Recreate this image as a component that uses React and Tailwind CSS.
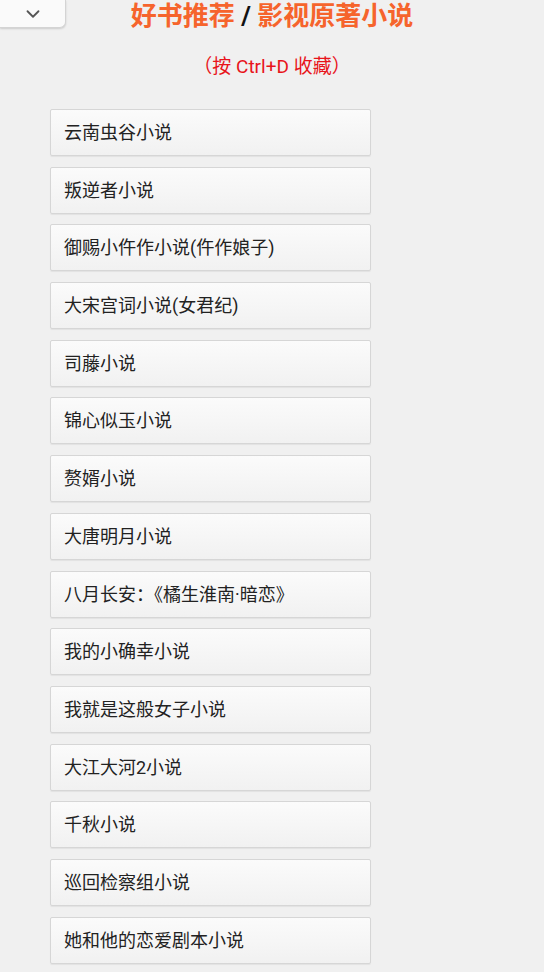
import { ChevronDown } from 'lucide-react';

const books = [
	'云南虫谷小说',
	'叛逆者小说',
	'御赐小仵作小说(仵作娘子)',
	'大宋宫词小说(女君纪)',
	'司藤小说',
	'锦心似玉小说',
	'赘婿小说',
	'大唐明月小说',
	'八月长安：《橘生淮南·暗恋》',
	'我的小确幸小说',
	'我就是这般女子小说',
	'大江大河2小说',
	'千秋小说',
	'巡回检察组小说',
	'她和他的恋爱剧本小说'
];

export default function App() {
	return (
		<div
			className="relative min-h-[972px] bg-[#f0f0f0] text-[#222]"
			style={{ fontFamily: '"Roboto", "Noto Sans CJK SC", sans-serif' }}
		>
			<div className="absolute left-0 top-0 flex h-[28px] w-[66px] items-center justify-center rounded-br-[6px] border-b border-r border-[#d4d4d4] bg-[#fafafa] shadow-[0_1px_2px_rgba(0,0,0,0.15)]">
				<ChevronDown size={22} strokeWidth={2} className="text-[#555]" />
			</div>
			<h1 className="pt-[1px] text-center text-[26px] font-bold leading-[30px]">
				<span className="text-[#f6642c]">好书推荐</span>
				<span className="text-[#111]"> / </span>
				<span className="text-[#f6642c]">影视原著小说</span>
			</h1>
			<p className="mt-[21px] text-center text-[19px] leading-[30px] text-[#e8141b]">（按 Ctrl+D 收藏）</p>
			<ul className="mt-[27px] flex w-[321px] flex-col gap-[10.7px] pl-[50px] box-content">
				{books.map((name) => (
					<li
						key={name}
						className="flex h-[47px] items-center rounded-[2px] border border-[#d6d6d6] bg-gradient-to-b from-[#fbfbfb] to-[#f1f1f1] px-[13px] text-[18px] text-[#222] shadow-[0_1px_1px_rgba(0,0,0,0.06)]"
					>
						{name}
					</li>
				))}
			</ul>
		</div>
	);
}
